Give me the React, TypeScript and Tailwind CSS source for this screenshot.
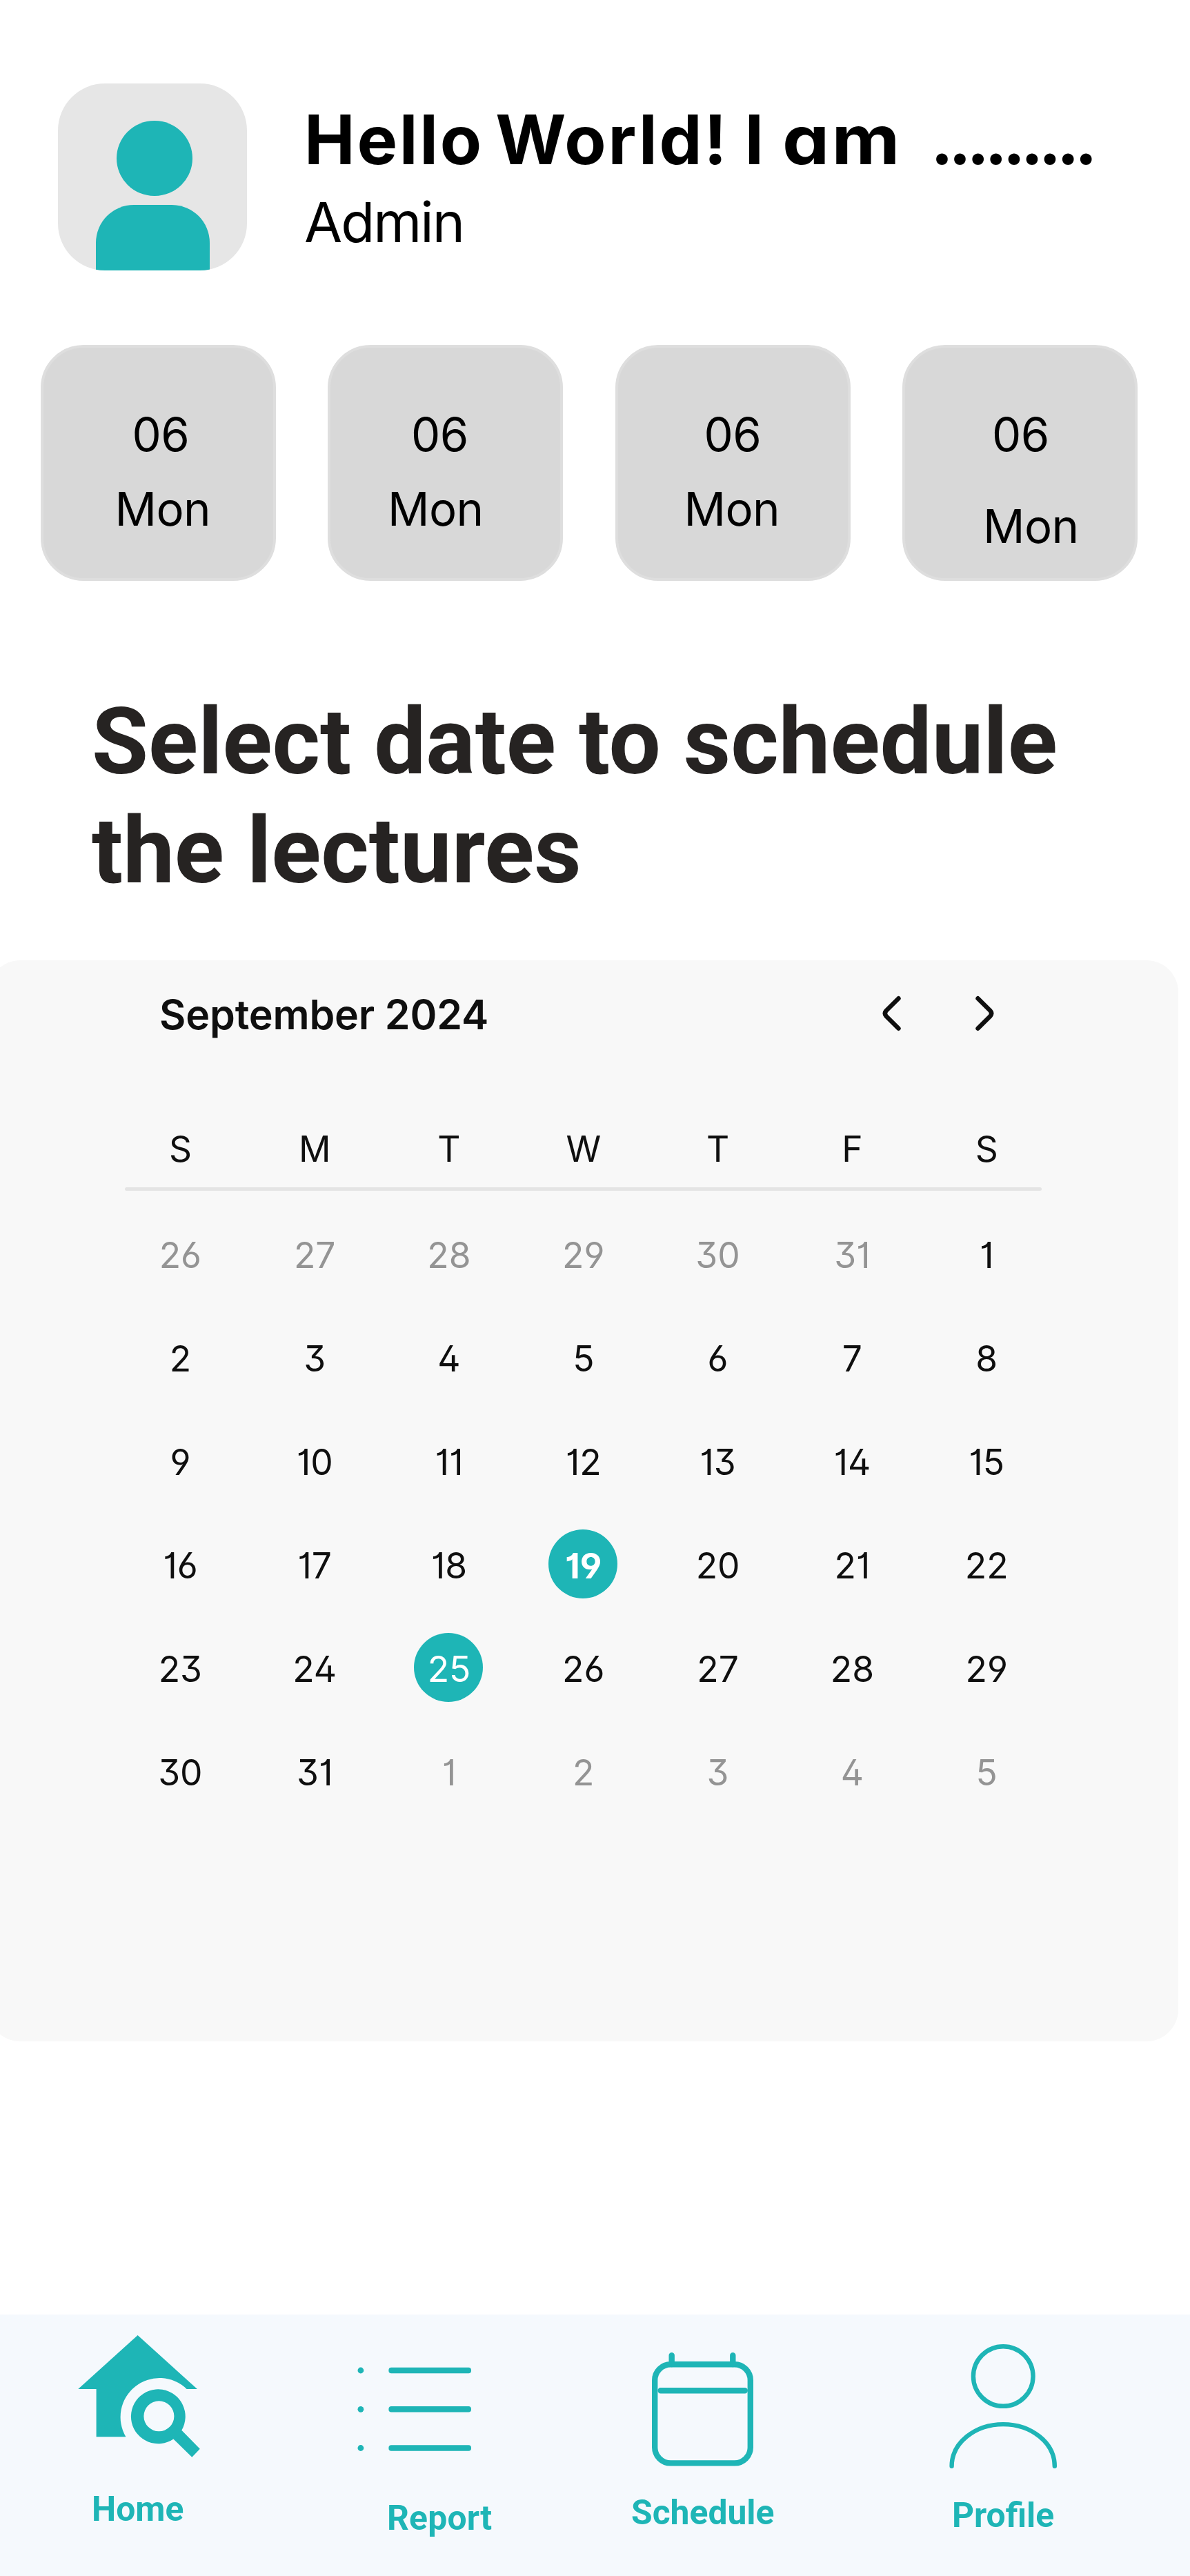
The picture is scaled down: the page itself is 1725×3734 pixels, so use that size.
import React from "react";

const INTER = "font-['Inter',sans-serif]";
const ROBOTO = "font-['Roboto',sans-serif]";

const dayCards = [
  { day: "06", name: "Mon", dayClass: "ml-[129px]", nameClass: "ml-[104px] mt-[8px]" },
  { day: "06", name: "Mon", dayClass: "ml-[117px]", nameClass: "ml-[83px] mt-[8px]" },
  { day: "06", name: "Mon", dayClass: "ml-[125px]", nameClass: "ml-[96px] mt-[8px]" },
  { day: "06", name: "Mon", dayClass: "ml-[126px]", nameClass: "ml-[113px] mt-[33px]" },
];

const weekdays = ["S", "M", "T", "W", "T", "F", "S"];

const weeks = [
  [26, 27, 28, 29, 30, 31, 1],
  [2, 3, 4, 5, 6, 7, 8],
  [9, 10, 11, 12, 13, 14, 15],
  [16, 17, 18, 19, 20, 21, 22],
  [23, 24, 25, 26, 27, 28, 29],
  [30, 31, 1, 2, 3, 4, 5],
];

function Avatar() {
  return (
    <div className="flex h-[271px] w-[274px] shrink-0 flex-col items-center overflow-hidden rounded-[68px] bg-[#e6e6e6] pt-[54px]">
      <div className="ml-[5px] h-[109px] w-[110px] shrink-0 rounded-full bg-[#1eb5b6]" />
      <div className="mt-[13px] h-[95px] w-[165px] shrink-0 rounded-t-[55px] bg-[#1eb5b6]" />
    </div>
  );
}

function Header() {
  return (
    <header className={`flex pl-[84px] pt-[121px] text-black ${INTER}`}>
      <Avatar />
      <div className="ml-[83px] pt-[22px]">
        <h1 className="flex h-[120px] whitespace-nowrap text-[98.5px] font-[650] leading-[120px] [font-feature-settings:'cv11']">
          <span className="w-[908px] tracking-[2.8px]">
            <span className="[word-spacing:-9px]">Hello </span>
            <span className="[word-spacing:-3px]">World! </span>
            <span className="[word-spacing:-2px]">I </span>
            <span className="inline-block origin-left scale-x-110">am</span>
          </span>
          <span className="tracking-[-6.8px]">.........</span>
        </h1>
        <p className="mt-[9px] text-[80px] leading-[100px] tracking-[-2px]">Admin</p>
      </div>
    </header>
  );
}

function DayCards() {
  return (
    <section className="mt-[108px] flex gap-[75.5px] pl-[58.5px]">
      {dayCards.map((c, i) => (
        <div
          key={i}
          className={`flex h-[342px] w-[341px] shrink-0 flex-col rounded-[62px] border-[4px] border-[#dedede] bg-[#d8d8d8] pt-[76px] text-[67px] leading-[100px] tracking-[-0.6px] text-black ${INTER}`}
        >
          <span className={c.dayClass}>{c.day}</span>
          <span className={c.nameClass}>{c.name}</span>
        </div>
      ))}
    </section>
  );
}

function Day({ value, week, col }: { value: number; week: number; col: number }) {
  const outside = (week === 0 && value > 20) || (week === 5 && value < 20);
  const bold = week === 3 && col === 3;
  const marked = bold || (week === 4 && col === 2);
  const tone = marked ? "text-white" : outside ? "text-[#949494]" : "text-[#0f0f0f]";
  return (
    <div className="flex h-[150px] items-center justify-center">
      <div
        className={`flex h-[100px] w-[100px] items-center justify-center rounded-full ${tone} ${
          marked ? "-translate-x-px bg-[#1eb5b6]" : ""
        } ${bold ? "font-bold" : ""}`}
      >
        <span className={marked ? "translate-x-[1px] translate-y-[2px]" : "translate-y-[2px]"}>{value}</span>
      </div>
    </div>
  );
}

function Calendar() {
  return (
    <section className={`-ml-[17px] mt-[79px] h-[1567px] w-[1725px] rounded-[46px] bg-[#f8f8f8] text-[#0f0f0f] ${INTER}`}>
      <div className="flex h-[154px] items-center pl-[248px]">
        <h3 className="w-[1045px] whitespace-nowrap pt-[3px] text-[59px] font-semibold leading-[80px] tracking-[-0.15px]">
          September 2024
        </h3>
        <div className="flex gap-[104px]">
          <svg width="32" height="54" viewBox="0 0 32 54" fill="none" stroke="currentColor" strokeWidth="6.4" strokeLinecap="round">
            <path d="M26.5 5.2 L8.6 23 Q5 27 8.6 31 L26.5 48.8" />
          </svg>
          <svg width="32" height="54" viewBox="0 0 32 54" fill="none" stroke="currentColor" strokeWidth="6.4" strokeLinecap="round">
            <path d="M5.5 5.2 L23.4 23 Q27 27 23.4 31 L5.5 48.8" />
          </svg>
        </div>
      </div>
      <div className="ml-[181px] w-[1363.6px] text-[51.5px] font-[440] [font-feature-settings:'cv01','cv02','cv03','cv04','cv09']">
        <div className="grid h-[175px] grid-cols-7 pt-[79px] leading-[80px]">
          {weekdays.map((d, i) => (
            <div key={i} className="text-center">
              {d}
            </div>
          ))}
        </div>
        <div className="ml-[17px] h-[5px] w-[1329px] rounded-full bg-[#e4e4e4]" />
        <div className="mt-[16px]">
          {weeks.map((week, w) => (
            <div key={w} className="grid grid-cols-7 leading-[80px]">
              {week.map((v, c) => (
                <Day key={c} value={v} week={w} col={c} />
              ))}
            </div>
          ))}
        </div>
      </div>
    </section>
  );
}

function HomeIcon() {
  return (
    <svg className="mt-[30px] ml-[113px]" width="180" height="180" viewBox="113 3385 180 180" fill="#1eb5b6">
      <path d="M199.6 3385 L285.9 3463 H270.6 A56.6 56.6 0 0 0 182.4 3532.3 H139.6 V3463 H113.3 Z" />
      <path
        fillRule="evenodd"
        d="M263.3 3522.7 L289.8 3549.8 L278.3 3561.8 L251.4 3535.4 A39.4 39.4 0 1 1 263.3 3522.7 Z M252.4 3502.3 A22 22 0 1 0 208.4 3502.3 A22 22 0 1 0 252.4 3502.3 Z"
      />
    </svg>
  );
}

function ListIcon() {
  return (
    <svg width="166" height="124" viewBox="518 3431 166 124" fill="#1eb5b6">
      {[3436, 3492.3, 3548.5].map((y) => (
        <g key={y}>
          <circle cx="522.9" cy={y} r="4.4" />
          <rect x="563.4" y={y - 4.3} width="119.6" height="8.6" rx="3.8" />
        </g>
      ))}
    </svg>
  );
}

function ScheduleIcon() {
  return (
    <svg width="148" height="168" viewBox="945 3409 148 168" fill="none" stroke="#1eb5b6" strokeWidth="8.4" strokeLinecap="round">
      <rect x="949.2" y="3427.2" width="138.6" height="143.2" rx="23" />
      <path d="M973.7 3414.2 V3427 M1062.3 3414.2 V3427 M957.6 3465.3 H1079.8" />
    </svg>
  );
}

function ProfileIcon() {
  return (
    <svg width="158" height="184" viewBox="1375 3397 158 184" fill="none" stroke="#1eb5b6" strokeWidth="6.4" strokeLinecap="round">
      <circle cx="1454.2" cy="3444.5" r="43.3" />
      <path d="M1379.6 3574.8 C1379.6 3541.2 1413 3514.1 1454.2 3514.1 C1495.4 3514.1 1528.8 3541.2 1528.8 3574.8" />
    </svg>
  );
}

function NavBar() {
  return (
    <nav className={`mt-auto flex h-[379px] bg-[#f5f9fd] text-[49.8px] font-bold leading-[60px] text-[#1eb5b6] ${ROBOTO}`}>
      <div className="w-[431px]">
        <HomeIcon />
        <span className="ml-[133px] mt-[42px] block">Home</span>
      </div>
      <div className="w-[431px]">
        <div className="ml-[87px] mt-[76px]">
          <ListIcon />
        </div>
        <span className="ml-[130px] mt-[65px] block tracking-[0.2px]">Report</span>
      </div>
      <div className="w-[431px]">
        <div className="ml-[83px] mt-[54px]">
          <ScheduleIcon />
        </div>
        <span className="ml-[53px] mt-[35px] block">Schedule</span>
      </div>
      <div className="w-[432px]">
        <div className="ml-[82px] mt-[42px]">
          <ProfileIcon />
        </div>
        <span className="ml-[87px] mt-[35px] block">Profile</span>
      </div>
    </nav>
  );
}

export default function App() {
  return (
    <div className="flex h-[3734px] w-[1725px] flex-col overflow-hidden bg-white">
      <Header />
      <DayCards />
      <h2 className={`ml-[133px] mt-[155px] whitespace-nowrap text-[133.4px] font-bold leading-[158px] text-[#262322] ${ROBOTO}`}>
        Select date to schedule
        <br />
        the lectures
      </h2>
      <Calendar />
      <NavBar />
    </div>
  );
}
